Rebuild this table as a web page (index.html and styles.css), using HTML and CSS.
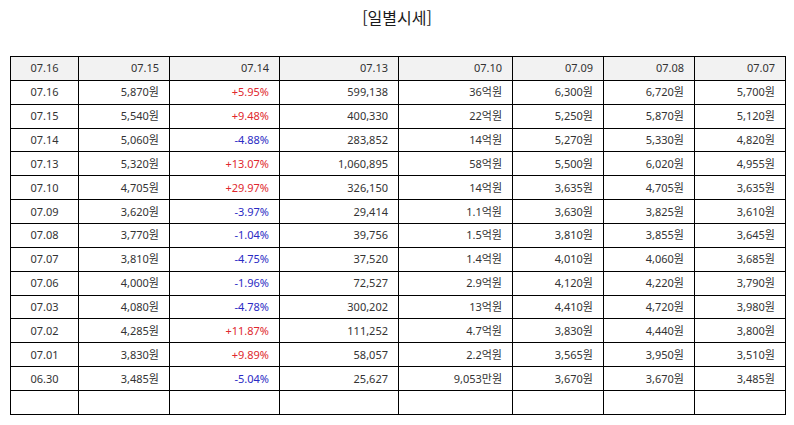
FILE: index.html
```html
<!DOCTYPE html>
<html lang="ko">
<head>
<meta charset="utf-8">
<link rel="stylesheet" href="styles.css">
</head>
<body>
<div class="page">
  <h1 class="title">[일별시세]</h1>
  <table class="quotes">
    <colgroup>
      <col class="c1"><col class="c2"><col class="c3"><col class="c4"><col class="c5"><col class="c6"><col class="c7"><col class="c8">
    </colgroup>
    <thead>
      <tr><th class="date">07.16</th><th>07.15</th><th>07.14</th><th>07.13</th><th>07.10</th><th>07.09</th><th>07.08</th><th>07.07</th></tr>
    </thead>
    <tbody>
      <tr><td class="date">07.16</td><td>5,870원</td><td class="up">+5.95%</td><td>599,138</td><td>36억원</td><td>6,300원</td><td>6,720원</td><td>5,700원</td></tr>
      <tr><td class="date">07.15</td><td>5,540원</td><td class="up">+9.48%</td><td>400,330</td><td>22억원</td><td>5,250원</td><td>5,870원</td><td>5,120원</td></tr>
      <tr><td class="date">07.14</td><td>5,060원</td><td class="down">-4.88%</td><td>283,852</td><td>14억원</td><td>5,270원</td><td>5,330원</td><td>4,820원</td></tr>
      <tr><td class="date">07.13</td><td>5,320원</td><td class="up">+13.07%</td><td>1,060,895</td><td>58억원</td><td>5,500원</td><td>6,020원</td><td>4,955원</td></tr>
      <tr><td class="date">07.10</td><td>4,705원</td><td class="up">+29.97%</td><td>326,150</td><td>14억원</td><td>3,635원</td><td>4,705원</td><td>3,635원</td></tr>
      <tr><td class="date">07.09</td><td>3,620원</td><td class="down">-3.97%</td><td>29,414</td><td>1.1억원</td><td>3,630원</td><td>3,825원</td><td>3,610원</td></tr>
      <tr><td class="date">07.08</td><td>3,770원</td><td class="down">-1.04%</td><td>39,756</td><td>1.5억원</td><td>3,810원</td><td>3,855원</td><td>3,645원</td></tr>
      <tr><td class="date">07.07</td><td>3,810원</td><td class="down">-4.75%</td><td>37,520</td><td>1.4억원</td><td>4,010원</td><td>4,060원</td><td>3,685원</td></tr>
      <tr><td class="date">07.06</td><td>4,000원</td><td class="down">-1.96%</td><td>72,527</td><td>2.9억원</td><td>4,120원</td><td>4,220원</td><td>3,790원</td></tr>
      <tr><td class="date">07.03</td><td>4,080원</td><td class="down">-4.78%</td><td>300,202</td><td>13억원</td><td>4,410원</td><td>4,720원</td><td>3,980원</td></tr>
      <tr><td class="date">07.02</td><td>4,285원</td><td class="up">+11.87%</td><td>111,252</td><td>4.7억원</td><td>3,830원</td><td>4,440원</td><td>3,800원</td></tr>
      <tr><td class="date">07.01</td><td>3,830원</td><td class="up">+9.89%</td><td>58,057</td><td>2.2억원</td><td>3,565원</td><td>3,950원</td><td>3,510원</td></tr>
      <tr><td class="date">06.30</td><td>3,485원</td><td class="down">-5.04%</td><td>25,627</td><td>9,053만원</td><td>3,670원</td><td>3,670원</td><td>3,485원</td></tr>
      <tr><td class="date"></td><td></td><td></td><td></td><td></td><td></td><td></td><td></td></tr>
    </tbody>
  </table>
</div>
</body>
</html>
```

FILE: styles.css
```css
html, body {
  margin: 0;
  padding: 0;
  background: #ffffff;
}
.page {
  padding: 0 10px;
  font-family: "Noto Sans", "Noto Sans CJK KR", sans-serif;
  color: #333333;
}
.title {
  margin: 0 0 28px 0;
  padding-top: 7px;
  font-family: "Noto Sans CJK KR", "Noto Sans", sans-serif;
  font-size: 16px;
  line-height: 21px;
  font-weight: normal;
  text-align: center;
  color: #1a1a1a;
}
.quotes {
  width: 775px;
  table-layout: fixed;
  border-collapse: collapse;
  font-size: 11px;
}
.c1 { width: 68px; }
.c2 { width: 91px; }
.c3 { width: 110px; }
.c4 { width: 119px; }
.c5 { width: 114px; }
.c6 { width: 91px; }
.c7 { width: 91px; }
.c8 { width: 91px; }
.quotes th,
.quotes td {
  border: 1px solid #000000;
  height: 22.87px;
  padding: 0 10px;
  text-align: right;
  font-weight: normal;
  line-height: 14px;
  white-space: nowrap;
}
.quotes th {
  background: #f2f2f2;
}
.quotes .date {
  text-align: center;
}
.quotes .up {
  color: #e0282e;
}
.quotes .down {
  color: #2b2bc4;
}
```
